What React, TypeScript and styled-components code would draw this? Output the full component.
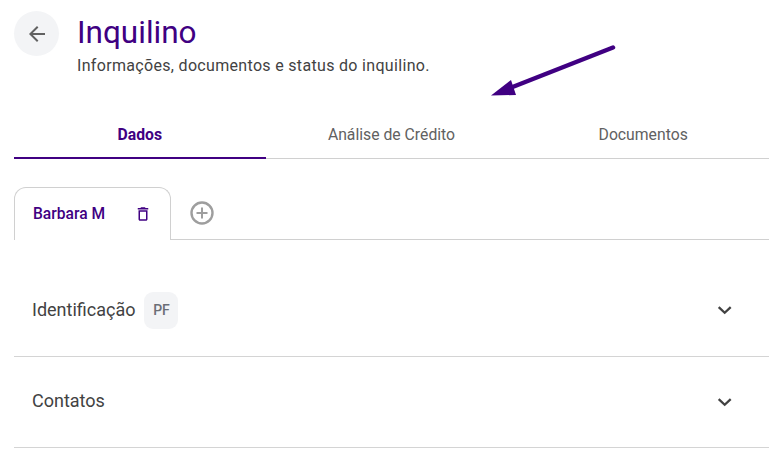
import React from 'react';
import styled, { createGlobalStyle } from 'styled-components';

const purple = 'rgb(64, 0, 130)';

const GlobalStyle = createGlobalStyle`
  html, body {
    margin: 0;
    padding: 0;
    background: #fff;
    overflow: hidden;
  }
  body {
    font-family: Roboto, "Liberation Sans", sans-serif;
  }
`;

const Page = styled.div`
  position: relative;
  width: 777px;
  height: 454px;
  box-sizing: border-box;
  padding: 11px 8px 0 14px;
`;

const Header = styled.header`
  display: flex;
  align-items: flex-start;
  gap: 18px;
  height: 100px;
`;

const BackButton = styled.button`
  width: 45px;
  height: 45px;
  padding: 0;
  border: none;
  border-radius: 50%;
  background: rgb(243, 244, 246);
  color: rgb(97, 97, 97);
  display: flex;
  align-items: center;
  justify-content: center;
`;

const Heading = styled.div`
  display: flex;
  flex-direction: column;
`;

const Title = styled.h1`
  margin: 4px 0 0;
  font-size: 31.5px;
  font-weight: 400;
  line-height: 36px;
  color: ${purple};
`;

const Subtitle = styled.p`
  margin: 5px 0 0;
  font-size: 16px;
  line-height: 19px;
  letter-spacing: 0.32px;
  color: rgb(66, 66, 66);
`;

const Tabs = styled.nav`
  display: grid;
  grid-template-columns: repeat(3, 1fr);
  border-bottom: 1px solid rgb(208, 208, 208);
`;

const Tab = styled.div<{ $active?: boolean }>`
  height: 48px;
  margin-bottom: -1px;
  display: flex;
  align-items: center;
  justify-content: center;
  box-sizing: border-box;
  font-size: 15.75px;
  font-weight: ${(p) => (p.$active ? 700 : 400)};
  color: ${(p) => (p.$active ? purple : 'rgb(97, 97, 97)')};
  border-bottom: 2px solid ${(p) => (p.$active ? purple : 'transparent')};
`;

const SubTabs = styled.div`
  display: flex;
  align-items: flex-end;
  margin-top: 27px;
  height: 53px;
  border-bottom: 1px solid rgb(208, 208, 208);
`;

const PersonTab = styled.div`
  box-sizing: border-box;
  width: 157px;
  height: 53px;
  margin-bottom: -1px;
  padding: 0 18px 1px 18px;
  display: flex;
  align-items: center;
  justify-content: space-between;
  background: #fff;
  border: 1px solid rgb(208, 208, 208);
  border-bottom: none;
  border-radius: 12px 12px 0 0;
  font-size: 15.6px;
  font-weight: 500;
  color: ${purple};
`;

const TrashIcon = styled.svg`
  width: 18px;
  height: 18px;
  color: ${purple};
`;

const AddButton = styled.div`
  align-self: center;
  margin-left: 18px;
  display: flex;
  color: rgb(158, 158, 158);
`;

const Section = styled.div`
  display: flex;
  align-items: center;
  justify-content: space-between;
  box-sizing: border-box;
  height: 91px;
  padding: 0 32px 3px 18px;
  border-bottom: 1px solid rgb(212, 212, 212);
`;

const FirstSection = styled(Section)`
  height: 117px;
  padding-top: 24px;
  padding-bottom: 0;
`;

const SectionTitle = styled.div`
  display: flex;
  align-items: center;
  gap: 9px;
  font-size: 18px;
  color: rgb(66, 66, 66);
`;

const SectionLabel = styled.span`
  margin-bottom: 2px;
`;

const Badge = styled.span`
  width: 34px;
  height: 37px;
  display: flex;
  align-items: center;
  justify-content: center;
  border-radius: 9px;
  background: rgb(243, 244, 246);
  font-size: 14px;
  font-weight: 500;
  color: rgb(107, 110, 118);
`;

const ChevronIcon = styled.svg<{ $drop?: number }>`
  width: 24px;
  height: 24px;
  flex: none;
  margin-top: ${(p) => p.$drop ?? 0}px;
`;

const Chevron = ({ drop }: { drop?: number }) => (
  <ChevronIcon $drop={drop} viewBox="0 0 24 24" fill="none" stroke="rgb(66,66,66)" strokeWidth="2.3">
    <path d="M5.7 9.2l6 5.6 6-5.6" />
  </ChevronIcon>
);

const ArrowOverlay = styled.svg`
  position: absolute;
  left: 480px;
  top: 30px;
  width: 150px;
  height: 80px;
`;

export default function App() {
  return (
    <>
      <GlobalStyle />
      <Page>
        <Header>
          <BackButton aria-label="Voltar">
            <svg width="24" height="24" viewBox="0 0 24 24" fill="currentColor">
              <path d="M20 11H7.83l5.59-5.59L12 4l-8 8 8 8 1.41-1.41L7.83 13H20v-2z" />
            </svg>
          </BackButton>
          <Heading>
            <Title>Inquilino</Title>
            <Subtitle>Informações, documentos e status do inquilino.</Subtitle>
          </Heading>
        </Header>

        <Tabs>
          <Tab $active>Dados</Tab>
          <Tab>Análise de Crédito</Tab>
          <Tab>Documentos</Tab>
        </Tabs>

        <SubTabs>
          <PersonTab>
            Barbara M
            <TrashIcon viewBox="0 0 24 24" fill="currentColor">
              <path d="M16 9v10H8V9h8m-1.5-6h-5l-1 1H5v2h14V4h-3.5l-1-1zM18 7H6v12c0 1.1.9 2 2 2h8c1.1 0 2-.9 2-2V7z" />
            </TrashIcon>
          </PersonTab>
          <AddButton>
            <svg width="26" height="26" viewBox="0 0 26 26" fill="none" stroke="currentColor" strokeWidth="2.4">
              <circle cx="13" cy="13" r="10.5" />
              <path d="M13 7.5v11M7.5 13h11" strokeWidth="2" />
            </svg>
          </AddButton>
        </SubTabs>

        <FirstSection>
          <SectionTitle>
            <SectionLabel>Identificação</SectionLabel>
            <Badge>PF</Badge>
          </SectionTitle>
          <Chevron />
        </FirstSection>
        <Section>
          <SectionTitle>Contatos</SectionTitle>
          <Chevron drop={3} />
        </Section>

        <ArrowOverlay viewBox="0 0 150 80">
          <path d="M133 17.5L30 58" stroke={purple} strokeWidth="4.5" strokeLinecap="round" fill="none" />
          <path d="M11 65.5L31 50l5 15z" fill={purple} />
        </ArrowOverlay>
      </Page>
    </>
  );
}
